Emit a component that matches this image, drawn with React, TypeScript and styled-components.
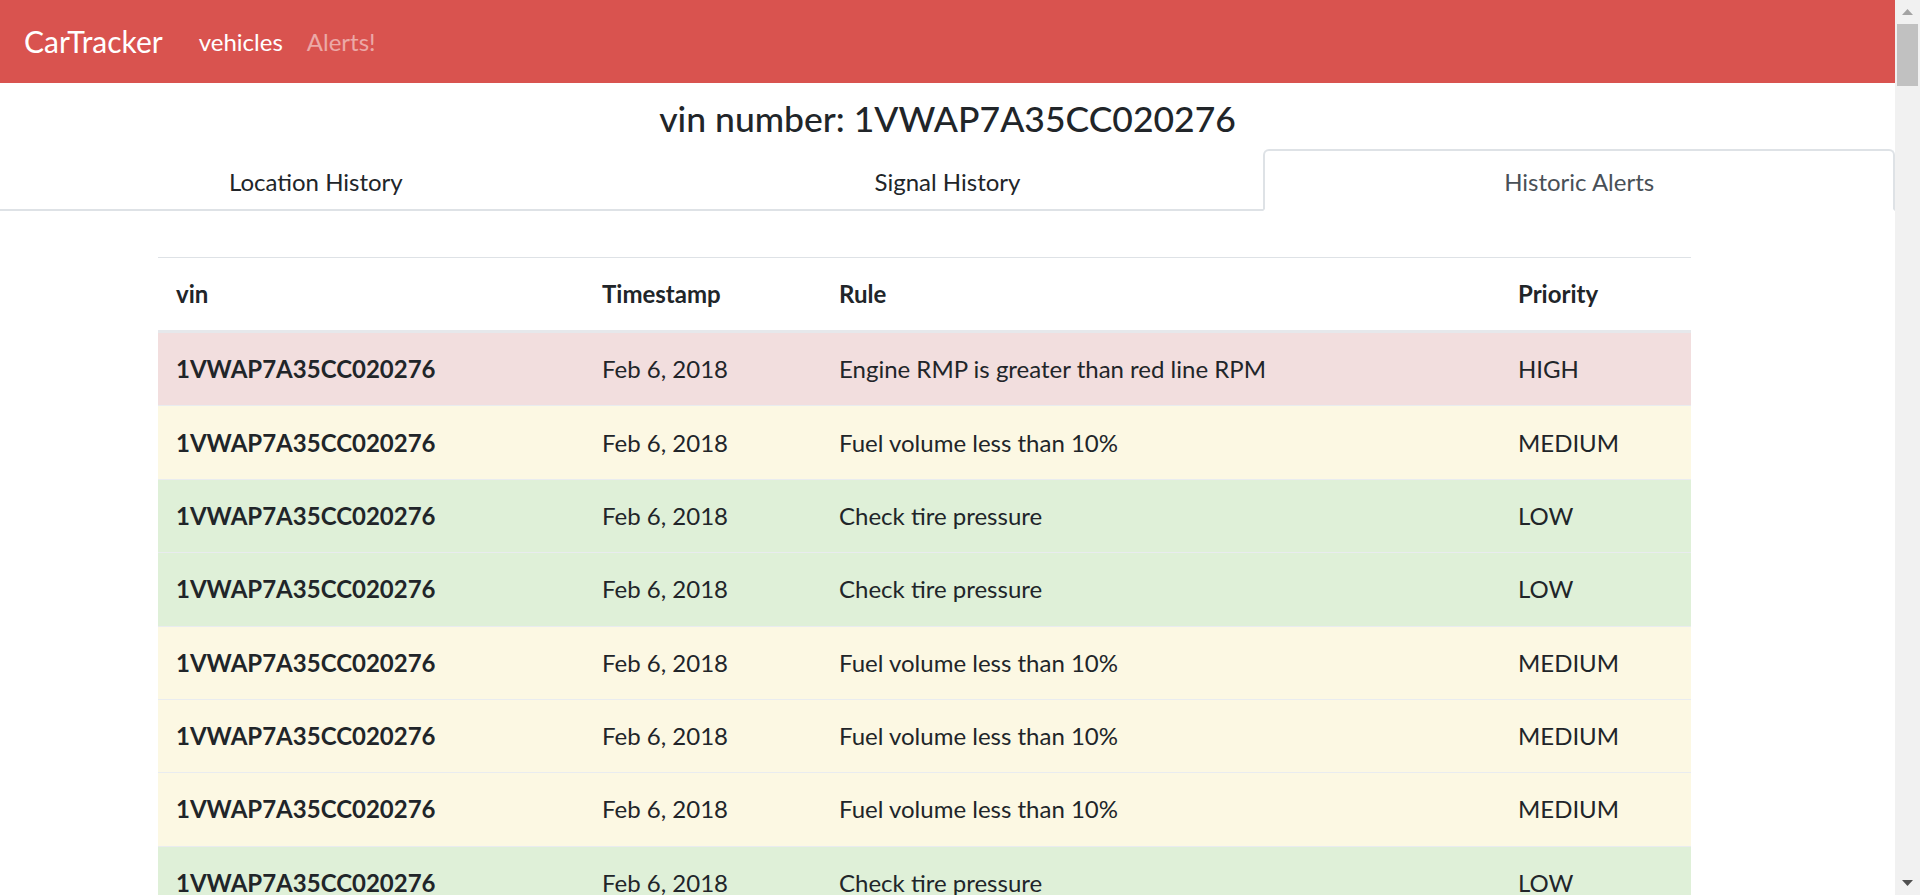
import styled, { createGlobalStyle } from 'styled-components'

type Priority = 'HIGH' | 'MEDIUM' | 'LOW'

type Alert = {
  vin: string
  timestamp: string
  rule: string
  priority: Priority
}

const VIN = '1VWAP7A35CC020276'

const alerts: Alert[] = [
  { vin: VIN, timestamp: 'Feb 6, 2018', rule: 'Engine RMP is greater than red line RPM', priority: 'HIGH' },
  { vin: VIN, timestamp: 'Feb 6, 2018', rule: 'Fuel volume less than 10%', priority: 'MEDIUM' },
  { vin: VIN, timestamp: 'Feb 6, 2018', rule: 'Check tire pressure', priority: 'LOW' },
  { vin: VIN, timestamp: 'Feb 6, 2018', rule: 'Check tire pressure', priority: 'LOW' },
  { vin: VIN, timestamp: 'Feb 6, 2018', rule: 'Fuel volume less than 10%', priority: 'MEDIUM' },
  { vin: VIN, timestamp: 'Feb 6, 2018', rule: 'Fuel volume less than 10%', priority: 'MEDIUM' },
  { vin: VIN, timestamp: 'Feb 6, 2018', rule: 'Fuel volume less than 10%', priority: 'MEDIUM' },
  { vin: VIN, timestamp: 'Feb 6, 2018', rule: 'Check tire pressure', priority: 'LOW' },
]

const rowColors: Record<Priority, string> = {
  HIGH: '#f2dede',
  MEDIUM: '#fcf8e3',
  LOW: '#dff0d8',
}

const GlobalStyle = createGlobalStyle`
  html, body {
    margin: 0;
    padding: 0;
    overflow: hidden;
  }
  body {
    font-family: Lato, "Noto Sans", "Liberation Sans", sans-serif;
    color: #212529;
    background: #fff;
  }
  * {
    box-sizing: border-box;
  }
`

const Shell = styled.div`
  display: flex;
  height: 100vh;
`

const Main = styled.main`
  flex: 1;
  min-width: 0;
  overflow: hidden;
`

const Navbar = styled.nav`
  display: flex;
  align-items: center;
  height: 83px;
  padding: 0 24px;
  background: #d9534f;
`

const Brand = styled.a`
  margin-right: 24px;
  font-size: 30px;
  line-height: 45px;
  color: #fff;
  text-decoration: none;
`

const NavLink = styled.a<{ $active?: boolean }>`
  padding: 0 12px;
  font-size: 24px;
  line-height: 36px;
  color: ${({ $active }) => ($active ? '#fff' : 'rgba(255, 255, 255, 0.5)')};
  text-decoration: none;
`

const Title = styled.h4`
  margin: 14px 0 9px;
  font-size: 35.5px;
  font-weight: 500;
  line-height: 43px;
  text-align: center;
`

const TabBar = styled.div`
  display: flex;
  border-bottom: 2px solid #dee2e6;
`

const Tab = styled.a<{ $active?: boolean }>`
  flex: 1;
  margin-bottom: -2px;
  padding: 13px 24px 9px;
  font-size: 24px;
  line-height: 36px;
  text-align: center;
  text-decoration: none;
  color: ${({ $active }) => ($active ? '#495057' : '#212529')};
  background: ${({ $active }) => ($active ? '#fff' : 'transparent')};
  border: 2px solid ${({ $active }) => ($active ? '#dee2e6' : 'transparent')};
  border-bottom-color: ${({ $active }) => ($active ? '#fff' : 'transparent')};
  border-radius: 6px 6px 0 0;
`

const TabContent = styled.section`
  padding: 46px 0 0 158px;
`

const Table = styled.table`
  width: 1533px;
  border-collapse: collapse;
  table-layout: fixed;
  font-size: 24px;
  line-height: 36px;
`

const HeadCell = styled.th<{ $width: number }>`
  width: ${({ $width }) => $width}px;
  padding: 18px;
  text-align: left;
  font-weight: 700;
  border-top: 1px solid #dee2e6;
  border-bottom: 3px solid #e6e8eb;
`

const Row = styled.tr<{ $priority: Priority }>`
  background: ${({ $priority }) => rowColors[$priority]};
`

const VinCell = styled.th`
  padding: 18.2px 18px;
  text-align: left;
  font-weight: 700;
  border-top: 1px solid #e9ecef;
  white-space: nowrap;
`

const Cell = styled.td`
  padding: 18.2px 18px;
  border-top: 1px solid #e9ecef;
  white-space: nowrap;
`

const ScrollTrack = styled.div`
  display: flex;
  flex-direction: column;
  width: 25px;
  background: #f1f1f1;
`

const ScrollButton = styled.div`
  display: flex;
  align-items: center;
  justify-content: center;
  height: 24px;
`

const ScrollThumb = styled.div`
  height: 62px;
  margin: 0 2px;
  background: #c1c1c1;
`

const ScrollSpace = styled.div`
  flex: 1;
`

function Arrow({ up, color }: { up?: boolean; color: string }) {
  return (
    <svg width="11" height="6" viewBox="0 0 11 6">
      <polygon points={up ? '0,6 5.5,0 11,6' : '0,0 5.5,6 11,0'} fill={color} />
    </svg>
  )
}

export default function App() {
  return (
    <>
      <GlobalStyle />
      <Shell>
        <Main>
          <Navbar>
            <Brand>CarTracker</Brand>
            <NavLink $active>vehicles</NavLink>
            <NavLink>Alerts!</NavLink>
          </Navbar>
          <Title>vin number: {VIN}</Title>
          <TabBar>
            <Tab>Location History</Tab>
            <Tab>Signal History</Tab>
            <Tab $active>Historic Alerts</Tab>
          </TabBar>
          <TabContent>
            <Table>
              <thead>
                <tr>
                  <HeadCell $width={426}>vin</HeadCell>
                  <HeadCell $width={237}>Timestamp</HeadCell>
                  <HeadCell $width={679}>Rule</HeadCell>
                  <HeadCell $width={191}>Priority</HeadCell>
                </tr>
              </thead>
              <tbody>
                {alerts.map((a, i) => (
                  <Row key={i} $priority={a.priority}>
                    <VinCell scope="row">{a.vin}</VinCell>
                    <Cell>{a.timestamp}</Cell>
                    <Cell>{a.rule}</Cell>
                    <Cell>{a.priority}</Cell>
                  </Row>
                ))}
              </tbody>
            </Table>
          </TabContent>
        </Main>
        <ScrollTrack>
          <ScrollButton>
            <Arrow up color="#a3a3a3" />
          </ScrollButton>
          <ScrollThumb />
          <ScrollSpace />
          <ScrollButton>
            <Arrow color="#505050" />
          </ScrollButton>
        </ScrollTrack>
      </Shell>
    </>
  )
}
